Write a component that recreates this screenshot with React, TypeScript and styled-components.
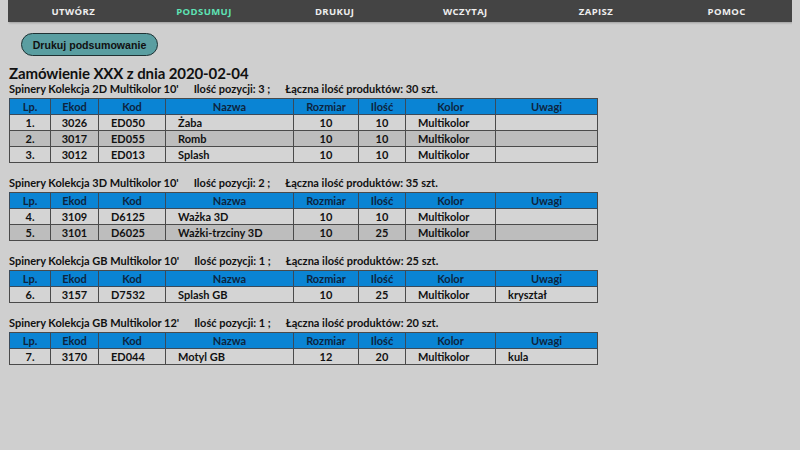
import { createGlobalStyle, styled } from 'styled-components';

const GlobalStyle = createGlobalStyle`
  body {
    margin: 0 8px 8px 8px;
    padding: 0;
    background-color: #cfcfcf;
    font-family: Lato, 'Open Sans', sans-serif;
  }
`;

const Navbar = styled.nav`
  display: grid;
  grid-template-columns: repeat(6, 1fr);
  height: 22px;
  background-color: #444444;
  box-shadow: 1px 1px 2px rgba(0, 0, 0, 0.25);
  font-family: 'Open Sans', sans-serif;
`

const NavItem = styled.div<{ $active?: boolean }>`
  display: flex;
  align-items: center;
  justify-content: center;
  font-size: 9.5px;
  font-weight: 700;
  letter-spacing: 0.4px;
  color: ${p => (p.$active ? '#5ee3b5' : '#eeeeee')};
`

const PrintButton = styled.button`
  margin: 11px 0 0 13px;
  width: 137px;
  height: 23px;
  border-radius: 12px;
  border: 1.5px solid #1f3234;
  background-color: #5a9ea1;
  color: #111;
  font-family: 'Liberation Sans', Arial, sans-serif;
  font-weight: 700;
  font-size: 10.6px;
  padding: 0;
`

const Title = styled.h1`
  margin: 8px 0 0 1px;
  font-size: 15px;
  letter-spacing: -0.1px;
  line-height: 18px;
  font-weight: 700;
  color: #111;
`

const Section = styled.section`
  margin-left: 1px;
  & + & {
    margin-top: 13px;
  }
`

const SubHeader = styled.div`
  display: flex;
  gap: 15px;
  font-size: 11px;
  font-weight: 700;
  line-height: 14px;
  color: #111;
  margin-bottom: 2px;
  white-space: pre;
`

const Table = styled.table`
  width: 588px;
  border-collapse: collapse;
  table-layout: fixed;
  font-size: 11px;
  font-weight: 700;
  color: #111;
  border: 1px solid #4a4a4a;
`

const Th = styled.th<{ $w: number }>`
  width: ${p => p.$w - 1}px;
  height: 15px;
  padding: 0;
  background-color: #0a84d4;
  color: #0d2440;
  font-weight: 700;
  text-align: center;
  border-left: 1px solid #3a4a5a;
  border-bottom: 1px solid #3a4a5a;
  line-height: 14px;
`

const Row = styled.tr<{ $dark?: boolean }>`
  background-color: ${p => (p.$dark ? '#bdbdbd' : '#d4d4d4')};
`

const Td = styled.td<{ $left?: boolean }>`
  height: 15px;
  padding: 0 0 0 ${p => (p.$left ? '12px' : '0')};
  text-align: ${p => (p.$left ? 'left' : 'center')};
  border: 1px solid #4a4a4a;
  line-height: 14px;
  overflow: hidden;
  white-space: nowrap;
`

const columns: [string, number][] = [
  ['Lp.', 41],
  ['Ekod', 48],
  ['Kod', 67],
  ['Nazwa', 128],
  ['Rozmiar', 65],
  ['Ilość', 47],
  ['Kolor', 90],
  ['Uwagi', 102],
]

type Item = [string, string, string, string, string, string, string, string]

const groups: { name: string; count: number; total: number; items: Item[] }[] = [
  {
    name: "Spinery Kolekcja 2D Multikolor 10'",
    count: 3,
    total: 30,
    items: [
      ['1.', '3026', 'ED050', 'Żaba', '10', '10', 'Multikolor', ''],
      ['2.', '3017', 'ED055', 'Romb', '10', '10', 'Multikolor', ''],
      ['3.', '3012', 'ED013', 'Splash', '10', '10', 'Multikolor', ''],
    ],
  },
  {
    name: "Spinery Kolekcja 3D Multikolor 10'",
    count: 2,
    total: 35,
    items: [
      ['4.', '3109', 'D6125', 'Ważka 3D', '10', '10', 'Multikolor', ''],
      ['5.', '3101', 'D6025', 'Ważki-trzciny 3D', '10', '25', 'Multikolor', ''],
    ],
  },
  {
    name: "Spinery Kolekcja GB Multikolor 10'",
    count: 1,
    total: 25,
    items: [['6.', '3157', 'D7532', 'Splash GB', '10', '25', 'Multikolor', 'kryształ']],
  },
  {
    name: "Spinery Kolekcja GB Multikolor 12'",
    count: 1,
    total: 20,
    items: [['7.', '3170', 'ED044', 'Motyl GB', '12', '20', 'Multikolor', 'kula']],
  },
]

const leftCols = [2, 3, 6, 7]

function App() {
  return (
    <>
      <GlobalStyle />
      <Navbar>
        <NavItem>UTWÓRZ</NavItem>
        <NavItem $active>PODSUMUJ</NavItem>
        <NavItem>DRUKUJ</NavItem>
        <NavItem>WCZYTAJ</NavItem>
        <NavItem>ZAPISZ</NavItem>
        <NavItem>POMOC</NavItem>
      </Navbar>

      <PrintButton>Drukuj podsumowanie</PrintButton>

      <Title>Zamówienie XXX z dnia 2020-02-04</Title>

      {groups.map(g => (
        <Section key={g.name}>
          <SubHeader>
            <span>{g.name}</span>
            <span>Ilość pozycji: {g.count} ;</span>
            <span>Łączna ilość produktów: {g.total} szt.</span>
          </SubHeader>
          <Table>
            <thead>
              <tr>
                {columns.map(([label, w]) => (
                  <Th key={label} $w={w}>{label}</Th>
                ))}
              </tr>
            </thead>
            <tbody>
              {g.items.map((item, i) => (
                <Row key={item[0]} $dark={i % 2 === 1}>
                  {item.map((v, j) => (
                    <Td key={j} $left={leftCols.includes(j)}>{v}</Td>
                  ))}
                </Row>
              ))}
            </tbody>
          </Table>
        </Section>
      ))}
    </>
  );
}

export default App
